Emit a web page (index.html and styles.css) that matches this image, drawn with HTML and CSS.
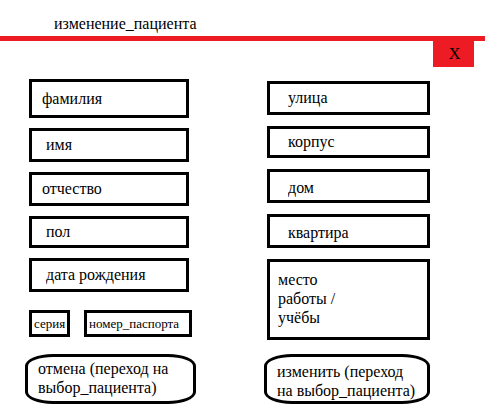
FILE: index.html
```html
<!DOCTYPE html>
<html lang="ru">
<head>
<meta charset="utf-8">
<title>изменение_пациента</title>
<link rel="stylesheet" href="styles.css">
</head>
<body>
<header class="header">
  <h1 class="title">изменение_пациента</h1>
</header>
<div class="toolbar">
  <button class="close" type="button">X</button>
</div>
<form class="form">
  <div class="column column-person">
    <input class="field field-tall" type="text" placeholder="фамилия" aria-label="фамилия">
    <input class="field field-indent" type="text" placeholder="имя" aria-label="имя">
    <input class="field" type="text" placeholder="отчество" aria-label="отчество">
    <input class="field field-indent field-short" type="text" placeholder="пол" aria-label="пол">
    <input class="field field-indent" type="text" placeholder="дата рождения" aria-label="дата рождения">
    <div class="passport">
      <input class="field field-small" type="text" placeholder="серия" aria-label="серия">
      <input class="field field-small" type="text" placeholder="номер_паспорта" aria-label="номер_паспорта">
    </div>
  </div>
  <div class="column column-address">
    <input class="field field-deep" type="text" placeholder="улица" aria-label="улица">
    <input class="field field-deep field-short" type="text" placeholder="корпус" aria-label="корпус">
    <input class="field field-deep field-low" type="text" placeholder="дом" aria-label="дом">
    <input class="field field-deep field-low" type="text" placeholder="квартира" aria-label="квартира">
    <textarea class="field field-area" placeholder="место&#10;работы /&#10;учёбы" aria-label="место работы / учёбы"></textarea>
  </div>
  <button class="action" type="button">отмена (переход на выбор_пациента)</button>
  <button class="action action-save" type="submit">изменить (переход на выбор_пациента)</button>
</form>
</body>
</html>
```

FILE: styles.css
```css
* {
  box-sizing: border-box;
}

body {
  margin: 0;
  background: #fff;
  color: #000;
  font-family: "Liberation Serif", serif;
  font-size: 16px;
  line-height: 19px;
}

.header {
  padding: 14px 54px 3px;
  border-bottom: 5px solid #ed1c24;
}

.title {
  margin: 0;
  font-size: 16px;
  font-weight: normal;
}

.toolbar {
  display: flex;
  justify-content: flex-end;
  padding-right: 11px;
}

.close {
  width: 41px;
  height: 26px;
  padding: 0 0 0 2px;
  border: 0;
  background: #ed1c24;
  color: #000;
  font-family: inherit;
  font-size: 16px;
}

.form {
  display: grid;
  grid-template-columns: 171fr 166fr;
  column-gap: 68px;
  row-gap: 14px;
  padding: 12px 55px 15px 25px;
}

.column {
  display: flex;
  flex-direction: column;
}

.column-person {
  gap: 10px;
  padding: 0 7px 0 4px;
}

.column-address {
  gap: 11px;
  padding: 2px 0 0 3px;
}

.field {
  width: 100%;
  height: 34px;
  margin: 0;
  padding: 0 10px;
  border: 3px solid #000;
  border-radius: 0;
  background: #fff;
  color: #000;
  font-family: inherit;
  font-size: 16px;
  line-height: 19px;
}

.field::placeholder {
  color: #000;
  opacity: 1;
}

.field-tall {
  height: 39px;
}

.field-short {
  height: 32px;
}

.field-indent {
  padding-left: 14px;
}

.field-deep {
  padding-left: 18px;
}

.field-low {
  padding-top: 4px;
}

.field-area {
  height: 81px;
  padding: 8px 8px 0;
  overflow: hidden;
  resize: none;
}

.passport {
  display: grid;
  grid-template-columns: 41fr 108fr;
  gap: 14px;
  margin: 8px -3px 0 0;
}

.field-small {
  height: 27px;
  padding: 0 2px;
  font-size: 13px;
}

.action {
  height: 50px;
  margin: 0;
  padding: 0 10px 2px;
  border: 3px solid #000;
  border-radius: 28px / 12px;
  background: #fff;
  color: #000;
  font-family: inherit;
  font-size: 16px;
  line-height: 19px;
  text-align: left;
}

.action-save {
  padding: 3px 8px 0 10px;
}
```
